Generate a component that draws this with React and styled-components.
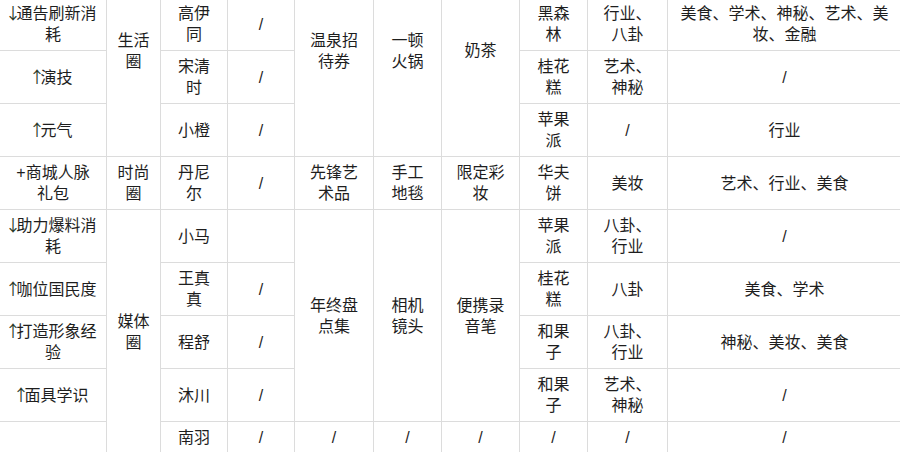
import React from "react";
import styled, { createGlobalStyle } from "styled-components";

const Global = createGlobalStyle`
  html, body { margin: 0; padding: 0; background: #fff; overflow: hidden; }
  body { width: 900px; height: 452px; }
`;

const Viewport = styled.div`
  width: 900px;
  height: 452px;
  overflow: hidden;
`;

const Table = styled.table`
  border-collapse: collapse;
  table-layout: fixed;
  width: 901px;
  margin: -56px 0 0 -1px;
  font-family: "Liberation Sans", "Noto Sans CJK SC", sans-serif;
  font-size: 16px;
  line-height: 21px;
  color: #1e1e1e;
`;

const Col = styled.col`
  width: ${(p) => p.$w}px;
`;

const Row = styled.tr`
  height: ${(p) => (p.$h ? `${p.$h}px` : "auto")};
`;

const Cell = styled.td`
  border: 1px solid #dcdcdc;
  padding: 5px ${(p) => p.$px ?? 10}px;
  text-align: center;
  vertical-align: middle;
  word-break: break-all;
`;

const Arrow = styled.span`
  display: inline-flex;
  justify-content: center;
  width: 7px;
  line-height: 14px;
  font-family: "Noto Sans CJK SC", sans-serif;
  color: #2a3a2a;
`;

const widths = [107, 54, 67, 67, 79, 68, 78, 68, 80, 234];

const Lead = ({ children }) => <Cell $px={9}>{children}</Cell>;

export default function App() {
  return (
    <Viewport>
      <Global />
      <Table>
        <colgroup>
          {widths.map((w, i) => (
            <Col key={i} $w={w} />
          ))}
        </colgroup>
        <tbody>
          <Row $h={53}>
            <Lead />
            <Cell rowSpan={4}>生活圈</Cell>
            <Cell />
            <Cell />
            <Cell rowSpan={4}>温泉招待券</Cell>
            <Cell rowSpan={4}>一顿火锅</Cell>
            <Cell rowSpan={4}>奶茶</Cell>
            <Cell />
            <Cell />
            <Cell />
          </Row>
          <Row>
            <Lead><Arrow>↓</Arrow>通告刷新消耗</Lead>
            <Cell>高伊同</Cell>
            <Cell>/</Cell>
            <Cell>黑森林</Cell>
            <Cell>行业、八卦</Cell>
            <Cell>美食、学术、神秘、艺术、美妆、金融</Cell>
          </Row>
          <Row>
            <Lead><Arrow>↑</Arrow>演技</Lead>
            <Cell>宋清时</Cell>
            <Cell>/</Cell>
            <Cell>桂花糕</Cell>
            <Cell>艺术、神秘</Cell>
            <Cell>/</Cell>
          </Row>
          <Row $h={53}>
            <Lead><Arrow>↑</Arrow>元气</Lead>
            <Cell>小橙</Cell>
            <Cell>/</Cell>
            <Cell>苹果派</Cell>
            <Cell>/</Cell>
            <Cell>行业</Cell>
          </Row>
          <Row>
            <Lead>+商城人脉礼包</Lead>
            <Cell>时尚圈</Cell>
            <Cell>丹尼尔</Cell>
            <Cell>/</Cell>
            <Cell>先锋艺术品</Cell>
            <Cell>手工地毯</Cell>
            <Cell>限定彩妆</Cell>
            <Cell>华夫饼</Cell>
            <Cell>美妆</Cell>
            <Cell>艺术、行业、美食</Cell>
          </Row>
          <Row>
            <Lead><Arrow>↓</Arrow>助力爆料消耗</Lead>
            <Cell rowSpan={5}>媒体圈</Cell>
            <Cell>小马</Cell>
            <Cell />
            <Cell rowSpan={4}>年终盘点集</Cell>
            <Cell rowSpan={4}>相机镜头</Cell>
            <Cell rowSpan={4}>便携录音笔</Cell>
            <Cell>苹果派</Cell>
            <Cell>八卦、行业</Cell>
            <Cell>/</Cell>
          </Row>
          <Row>
            <Lead><Arrow>↑</Arrow>咖位国民度</Lead>
            <Cell>王真真</Cell>
            <Cell>/</Cell>
            <Cell>桂花糕</Cell>
            <Cell>八卦</Cell>
            <Cell>美食、学术</Cell>
          </Row>
          <Row>
            <Lead><Arrow>↑</Arrow>打造形象经验</Lead>
            <Cell>程舒</Cell>
            <Cell>/</Cell>
            <Cell>和果子</Cell>
            <Cell>八卦、行业</Cell>
            <Cell>神秘、美妆、美食</Cell>
          </Row>
          <Row>
            <Lead><Arrow>↑</Arrow>面具学识</Lead>
            <Cell>沐川</Cell>
            <Cell>/</Cell>
            <Cell>和果子</Cell>
            <Cell>艺术、神秘</Cell>
            <Cell>/</Cell>
          </Row>
          <Row>
            <Lead />
            <Cell>南羽</Cell>
            <Cell>/</Cell>
            <Cell>/</Cell>
            <Cell>/</Cell>
            <Cell>/</Cell>
            <Cell>/</Cell>
            <Cell>/</Cell>
            <Cell>/</Cell>
          </Row>
        </tbody>
      </Table>
    </Viewport>
  );
}
